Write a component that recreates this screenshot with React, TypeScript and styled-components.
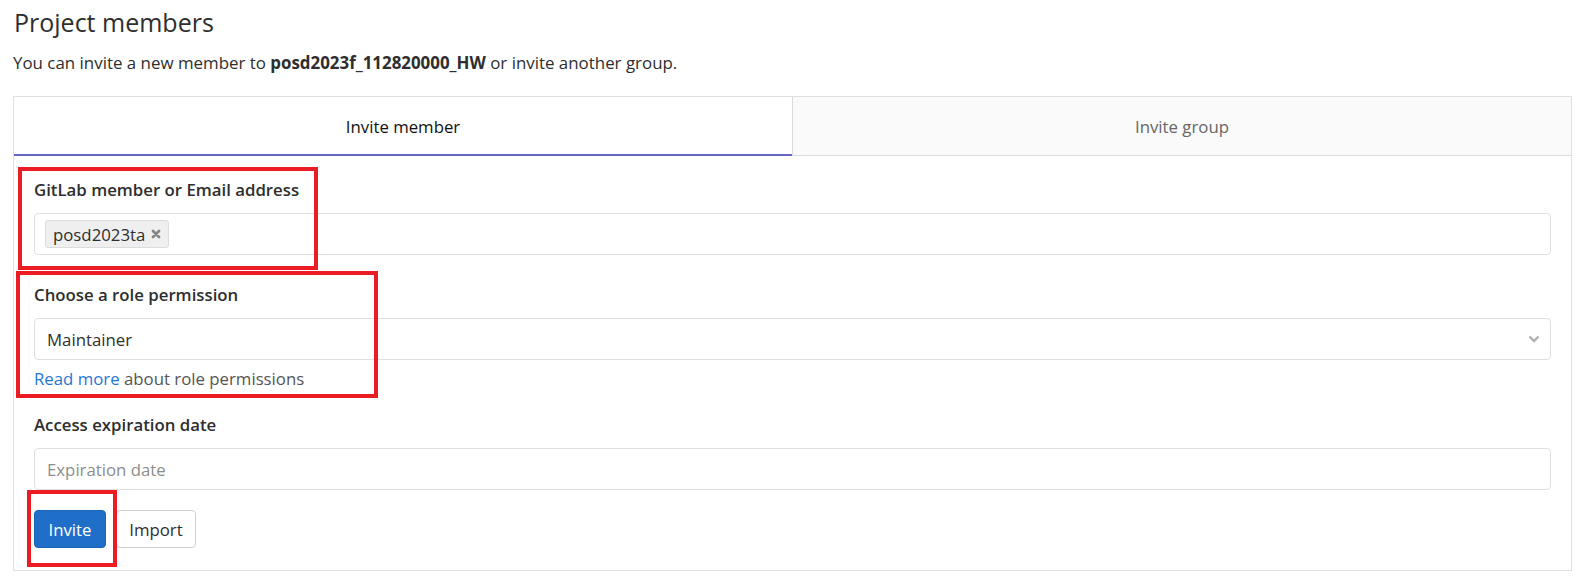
import React from "react";
import styled, { createGlobalStyle } from "styled-components";

const Global = createGlobalStyle`
  html, body { margin: 0; padding: 0; background: #fff; }
  body { font-family: "Open Sans", "Noto Sans", sans-serif; color: #2e2e2e; }
  * { box-sizing: border-box; }
`;

const Page = styled.div`
  position: relative;
  width: 1582px;
  height: 580px;
  padding: 0 10px 0 13px;
  overflow: hidden;
`;

const Title = styled.h3`
  margin: 0;
  padding-top: 6px;
  font-size: 25px;
  font-weight: 400;
  line-height: 32px;
  color: #2e2e2e;
  padding-left: 1px;
`;

const Lead = styled.p`
  margin: 14px 0 0 0;
  font-size: 16.9px;
  line-height: 22px;
  color: #2e2e2e;
  b { font-weight: 700; }
`;

const Panel = styled.div`
  margin-top: 22px;
  border: 1px solid #e0e0e0;
  background: #fff;
`;

const Tabs = styled.div`
  display: flex;
  height: 59px;
  border-bottom: 1px solid #dcdcdc;
`;

const Tab = styled.div<{ $active?: boolean }>`
  flex: 1;
  display: flex;
  align-items: center;
  justify-content: center;
  font-size: 16.8px;
  background: ${(p) => (p.$active ? "#fff" : "#fafafa")};
  color: ${(p) => (p.$active ? "#111" : "#666")};
  box-shadow: ${(p) => (p.$active ? "inset 0 -2px 0 #6666c4" : "none")};
  margin-bottom: ${(p) => (p.$active ? "-1px" : "0")};
  & + & { border-left: 1px solid #dcdcdc; }
`;

const Body = styled.div`
  padding: 23px 20px 22px 20px;
  display: flex;
  flex-direction: column;
`;

const Field = styled.div<{ $gap?: number }>`
  display: flex;
  flex-direction: column;
  margin-bottom: ${(p) => p.$gap ?? 18}px;
`;

const Label = styled.label`
  font-size: 16.8px;
  font-weight: 600;
  line-height: 22px;
  margin-bottom: 12px;
  color: #2e2e2e;
`;

const InputBox = styled.div`
  height: 42px;
  border: 1px solid #dfdfdf;
  border-radius: 4px;
  background: #fff;
  display: flex;
  align-items: center;
  padding: 0 11px;
  position: relative;
  font-size: 16.8px;
`;

const Token = styled.span`
  display: inline-flex;
  align-items: center;
  gap: 6px;
  height: 28px;
  padding: 0 7px 0 7px;
  margin-left: -1px;
  background: #efefef;
  border: 1px solid #dcdcdc;
  border-radius: 3px;
  font-size: 16.8px;
  color: #2e2e2e;
`;

const Placeholder = styled.span`
  color: #8d8d8d;
  padding-left: 1px;
`;

const Value = styled.span`
  color: #2e2e2e;
  padding-left: 1px;
`;

const Chevron = styled.svg`
  position: absolute;
  right: 10px;
  top: 50%;
  margin-top: -4px;
`;

const Help = styled.div`
  margin-top: 8px;
  font-size: 16.8px;
  line-height: 22px;
  color: #555;
  a { color: #1f78d1; text-decoration: none; }
`;

const Actions = styled.div`
  display: flex;
  gap: 10px;
  margin-top: 20px;
`;

const Button = styled.button<{ $primary?: boolean }>`
  height: 38px;
  padding: 0 12px;
  border-radius: 4px;
  font-family: inherit;
  font-size: 16.8px;
  cursor: pointer;
  background: ${(p) => (p.$primary ? "#1f6fc8" : "#fff")};
  color: ${(p) => (p.$primary ? "#fff" : "#2e2e2e")};
  border: 1px solid ${(p) => (p.$primary ? "#1a64b6" : "#cfcfcf")};
  min-width: ${(p) => (p.$primary ? "72px" : "80px")};
`;

const Highlight = styled.div<{ $x: number; $y: number; $w: number; $h: number }>`
  position: absolute;
  left: ${(p) => p.$x}px;
  top: ${(p) => p.$y}px;
  width: ${(p) => p.$w}px;
  height: ${(p) => p.$h}px;
  border: 4px solid #ec1c24;
  pointer-events: none;
`;

export default function App() {
  return (
    <>
      <Global />
      <Page>
        <Title>Project members</Title>
        <Lead>
          You can invite a new member to <b>posd2023f_112820000_HW</b> or invite another group.
        </Lead>
        <Panel>
          <Tabs>
            <Tab $active>Invite member</Tab>
            <Tab>Invite group</Tab>
          </Tabs>
          <Body>
            <Field $gap={29}>
              <Label>GitLab member or Email address</Label>
              <InputBox>
                <Token>
                  posd2023ta
                  <svg width="10" height="10" viewBox="0 0 10 10">
                    <path d="M2 2 L8 8 M8 2 L2 8" stroke="#858585" strokeWidth="2.8" strokeLinecap="round" />
                  </svg>
                </Token>
              </InputBox>
            </Field>
            <Field $gap={24}>
              <Label>Choose a role permission</Label>
              <InputBox>
                <Value>Maintainer</Value>
                <Chevron width="12" height="8" viewBox="0 0 12 8">
                  <path d="M1.5 1.5 L6 6 L10.5 1.5" fill="none" stroke="#b0b0b0" strokeWidth="2.4" />
                </Chevron>
              </InputBox>
              <Help>
                <a href="#">Read more</a> about role permissions
              </Help>
            </Field>
            <Field $gap={0}>
              <Label>Access expiration date</Label>
              <InputBox>
                <Placeholder>Expiration date</Placeholder>
              </InputBox>
            </Field>
            <Actions>
              <Button $primary>Invite</Button>
              <Button>Import</Button>
            </Actions>
          </Body>
        </Panel>
        <Highlight $x={18} $y={167} $w={300} $h={103} />
        <Highlight $x={16} $y={271} $w={362} $h={127} />
        <Highlight $x={27} $y={490} $w={90} $h={77} />
      </Page>
    </>
  );
}
